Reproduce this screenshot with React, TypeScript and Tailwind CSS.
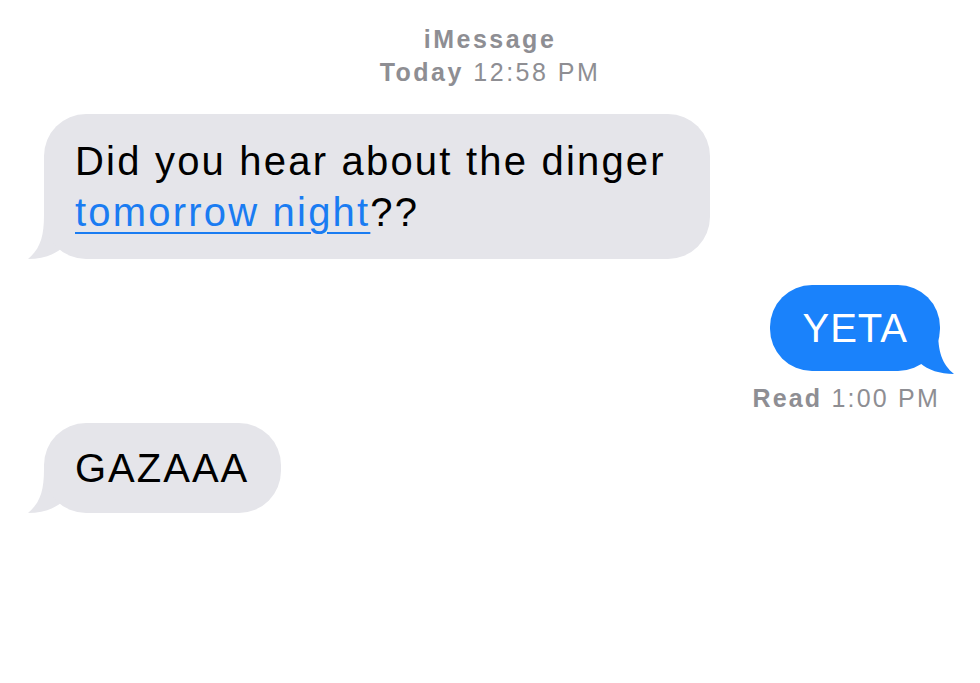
const font = "font-['Liberation_Sans',Arial,sans-serif]";

function TailLeft({ color }: { color: string }) {
  return (
    <svg
      className="absolute bottom-0 left-[-18px]"
      width="50"
      height="44"
      viewBox="0 0 50 44"
      aria-hidden="true"
    >
      <path d="M18 0 C18 22 14 34 2 44 C16 44 28 40 36 33 L50 33 L50 0 Z" fill={color} />
    </svg>
  );
}

function TailRight({ color }: { color: string }) {
  return (
    <svg
      className="absolute bottom-[-3px] right-[-16px]"
      width="50"
      height="44"
      viewBox="0 0 50 44"
      aria-hidden="true"
    >
      <path d="M32 0 C32 22 36 34 48 44 C34 44 22 40 14 33 L0 33 L0 0 Z" fill={color} />
    </svg>
  );
}

export default function App() {
  return (
    <div className={`relative h-[683px] w-[980px] overflow-hidden bg-white ${font}`}>
      <div className="pt-[23px] text-center text-[25px] leading-[33px] tracking-[2.5px] text-[#8e8e93]">
        <div className="font-semibold">iMessage</div>
        <div>
          <span className="font-semibold">Today</span> 12:58 PM
        </div>
      </div>

      <div className="flex flex-col px-[44px] pt-[25px]">
        <div className="relative w-fit">
          <TailLeft color="#e5e5ea" />
          <div className="relative rounded-[42px] bg-[#e5e5ea] pl-[31px] pr-[44px] pb-[21px] pt-[22px] text-[40px] leading-[51px] tracking-[2.2px] text-black">
            Did you hear about the dinger
            <br />
            <span className="text-[#1a7cf2] underline decoration-[2px] underline-offset-[6px]">
              tomorrow night
            </span>
            ??
          </div>
        </div>

        <div className="mt-[26px] self-end mr-[-4px]">
          <div className="relative ml-auto w-fit">
            <TailRight color="#1a82fb" />
            <div className="relative rounded-[42px] bg-[#1a82fb] px-[32px] pb-[17px] pt-[18px] text-[40px] leading-[51px] tracking-[1px] text-white">
              YETA
            </div>
          </div>
          <div className="mt-[12px] text-right text-[25px] leading-[30px] tracking-[2.2px] text-[#8e8e93]">
            <span className="font-semibold">Read</span> 1:00 PM
          </div>
        </div>

        <div className="relative mt-[10px] w-fit">
          <TailLeft color="#e5e5ea" />
          <div className="relative rounded-[42px] bg-[#e5e5ea] pl-[31px] pr-[32px] pb-[19px] pt-[20px] text-[40px] leading-[51px] tracking-[2px] text-black">
            GAZAAA
          </div>
        </div>
      </div>
    </div>
  );
}
